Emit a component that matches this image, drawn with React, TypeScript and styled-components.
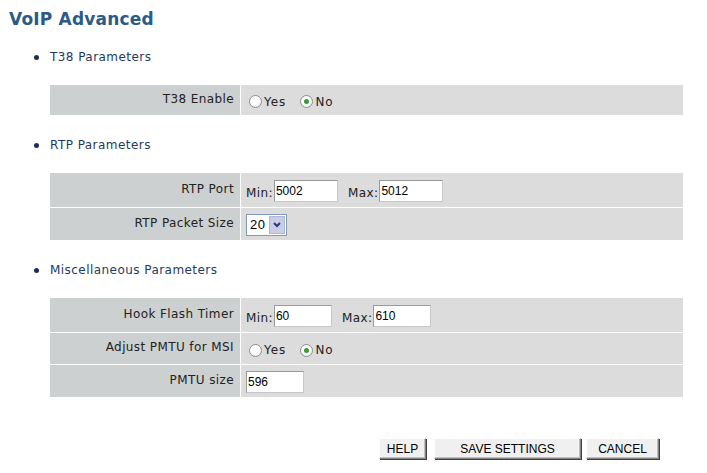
import styled, { createGlobalStyle } from 'styled-components';

const GlobalStyle = createGlobalStyle`
  body {
    margin: 0;
    background: #ffffff;
    font-family: "DejaVu Sans", Verdana, sans-serif;
  }
`;

const sections = [
  {
    id: 1,
    title: "T38 Parameters",
    rows: [{ label: "T38 Enable", kind: "radio", height: 30 }],
  },
  {
    id: 2,
    title: "RTP Parameters",
    rows: [
      { label: "RTP Port", kind: "range", min: "5002", max: "5012", width: 64, height: 34 },
      { label: "RTP Packet Size", kind: "select", value: "20", height: 32 },
    ],
  },
  {
    id: 3,
    title: "Miscellaneous Parameters",
    rows: [
      { label: "Hook Flash Timer", kind: "range", min: "60", max: "610", width: 58, height: 34 },
      { label: "Adjust PMTU for MSI", kind: "radio", height: 31 },
      { label: "PMTU size", kind: "text", value: "596", width: 58, height: 32 },
    ],
  },
];

const Page = styled.div`
  width: 707px;
  height: 473px;
  padding: 8px 0 0 9px;
  box-sizing: border-box;
`;

const Title = styled.h1`
  margin: 0;
  font-size: 17px;
  letter-spacing: 0.2px;
  font-weight: bold;
  color: #2e5a87;
  line-height: 22px;
`;

const Section = styled.div`
  margin-top: 22px;
  &:first-of-type {
    margin-top: 19px;
  }
`;

const Heading = styled.div`
  display: flex;
  align-items: center;
  padding-left: 25px;
  font-size: 12px;
  letter-spacing: 0.45px;
  color: #1f3a5f;
  height: 16px;
  &::before {
    content: "";
    width: 5px;
    height: 5px;
    border-radius: 50%;
    background: #1a2f55;
    margin-right: 11px;
  }
`;

const Table = styled.div`
  margin: 20px 0 0 41px;
  width: 633px;
  display: grid;
  grid-template-columns: 190px 442px;
  column-gap: 1px;
  row-gap: 1px;
  background: #ffffff;
`;

const LabelCell = styled.div<{ $h: number }>`
  height: ${(p) => p.$h}px;
  background: #cdd0d0;
  display: flex;
  align-items: center;
  justify-content: flex-end;
  padding: 0 6px 3px 0;
  box-sizing: border-box;
  font-size: 12px;
  letter-spacing: 0.4px;
  color: #222;
`;

const ValueCell = styled.div<{ $h: number }>`
  height: ${(p) => p.$h}px;
  background: #dcdcdc;
  display: flex;
  align-items: center;
  padding: 1px 0 0 5px;
  box-sizing: border-box;
  font-size: 12px;
  letter-spacing: 0.4px;
  color: #222;
`;

const Small = styled.span`
  margin-top: 5px;
  margin-right: 1px;
`;

const Field = styled.input<{ $w: number }>`
  width: ${(p) => p.$w}px;
  height: 22px;
  box-sizing: border-box;
  border: 1px solid #9a9a9a;
  border-right-color: #c8c8c8;
  border-bottom-color: #c8c8c8;
  background: #fff;
  font-family: "Liberation Sans", Arial, sans-serif;
  font-size: 12px;
  padding: 0 1px;
  color: #000;
  margin-right: 10px;
  outline: none;
`;

const Radio = styled.span<{ $on?: boolean }>`
  width: 13px;
  height: 13px;
  border-radius: 50%;
  border: 1px solid #8a8f96;
  background: radial-gradient(circle at 40% 35%, #ffffff 40%, #e6e6e6 100%);
  box-sizing: border-box;
  display: inline-flex;
  align-items: center;
  justify-content: center;
  margin-right: 2px;
  &::after {
    content: "";
    width: 5px;
    height: 5px;
    border-radius: 50%;
    background: ${(p) => (p.$on ? "#3c9a3c" : "transparent")};
  }
`;

const Option = styled.label`
  display: inline-flex;
  align-items: center;
  margin: 2px 14px 0 0;
  letter-spacing: 1px;
  &:first-child {
    margin-left: 3px;
  }
`;

const SelectBox = styled.div`
  display: inline-flex;
  align-items: stretch;
  height: 22px;
  width: 41px;
  border: 1px solid #7f9db9;
  background: #fff;
  box-sizing: border-box;
  font-family: "Liberation Sans", Arial, sans-serif;
  font-size: 13px;
  color: #000;
`;

const SelectText = styled.span`
  flex: 1;
  display: flex;
  align-items: center;
  padding-left: 3px;
`;

const SelectArrow = styled.span`
  width: 16px;
  margin: 1px;
  background: #c9cde6;
  border: 1px solid #b0b6d8;
  box-sizing: border-box;
  display: flex;
  align-items: center;
  justify-content: center;
`;

const Buttons = styled.div`
  display: flex;
  gap: 8px;
  margin: 41px 0 0 370px;
`;

const Button = styled.button<{ $w: number }>`
  width: ${(p) => p.$w}px;
  height: 21px;
  padding: 0;
  margin-right: ${(p) => (p.$w === 147 ? -3 : 0)}px;
  background: #f0f0f0;
  border: 1px solid;
  border-color: #ffffff #808080 #808080 #ffffff;
  box-shadow: 1px 1px 0 #404040, inset -1px -1px 0 #c0c0c0;
  font-family: "Liberation Sans", Arial, sans-serif;
  font-size: 12px;
  color: #000;
`;

type Row = (typeof sections)[number]["rows"][number] & {
  min?: string;
  max?: string;
  value?: string;
  width?: number;
};

function Value({ row }: { row: Row }) {
  if (row.kind === "radio") {
    return (
      <>
        <Option><Radio />Yes</Option>
        <Option><Radio $on />No</Option>
      </>
    );
  }
  if (row.kind === "range") {
    return (
      <>
        <Small>Min:</Small>
        <Field $w={row.width ?? 60} defaultValue={row.min} />
        <Small>Max:</Small>
        <Field $w={row.width ?? 60} defaultValue={row.max} />
      </>
    );
  }
  if (row.kind === "select") {
    return (
      <SelectBox>
        <SelectText>{row.value}</SelectText>
        <SelectArrow>
          <svg width="8" height="6" viewBox="0 0 8 6">
            <path d="M1 1 L4 4 L7 1" stroke="#2a3a7a" strokeWidth="2" fill="none" />
          </svg>
        </SelectArrow>
      </SelectBox>
    );
  }
  return <Field $w={row.width ?? 60} defaultValue={row.value} />;
}

export default function App() {
  return (
    <Page>
      <GlobalStyle />
      <Title>VoIP Advanced</Title>
      {sections.map((s) => (
        <Section key={s.id}>
          <Heading>{s.title}</Heading>
          <Table>
            {s.rows.map((r) => (
              <>
                <LabelCell key={r.label + "l"} $h={r.height}>{r.label}</LabelCell>
                <ValueCell key={r.label + "v"} $h={r.height}>
                  <Value row={r as Row} />
                </ValueCell>
              </>
            ))}
          </Table>
        </Section>
      ))}
      <Buttons>
        <Button $w={47}>HELP</Button>
        <Button $w={147}>SAVE SETTINGS</Button>
        <Button $w={73}>CANCEL</Button>
      </Buttons>
    </Page>
  );
}
